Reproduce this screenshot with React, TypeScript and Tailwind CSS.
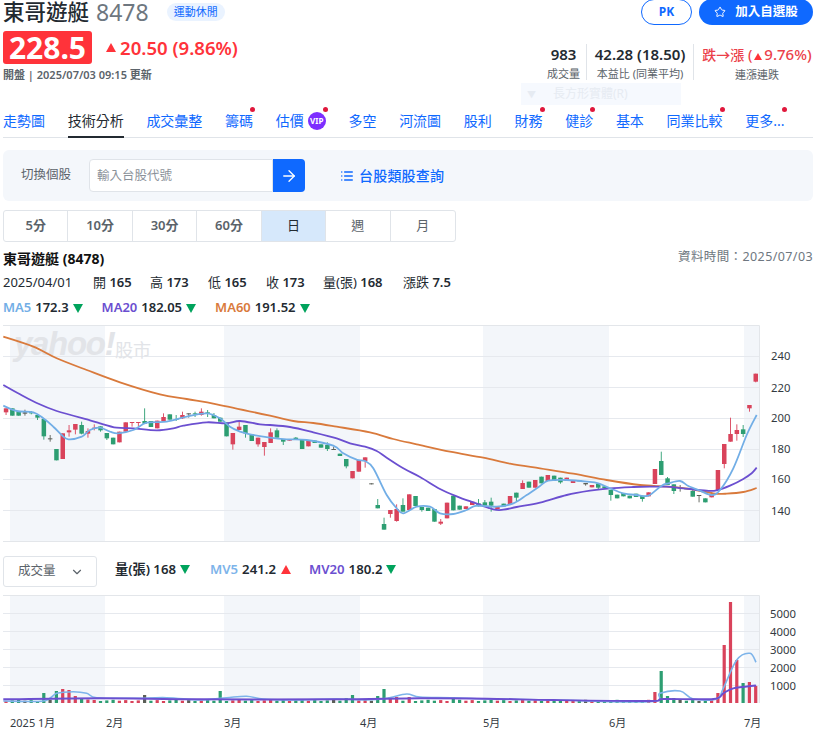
import React from "react";
import { ArrowRight, ChevronDown, List, Star } from "lucide-react";

const FONT = { fontFamily: '"Noto Sans","Noto Sans CJK TC",sans-serif' };
const RED = "#d9435b";
const GRN = "#2d9e72";
const DRK = "#5b5f57";

const r = RED, g = GRN, d = DRK;
// body top, body bottom, wick top, wick bottom (in 3x zoomed y), colour
const candles: [number, number, number, number, string][] = [
  [250,262,250,270,r],[250,272,250,272,g],[260,272,260,272,g],[262,266,254,272,d],[262,265,258,268,g],[270,278,268,285,g],[282,334,282,344,g],[340,343,330,350,d],[372,406,372,406,g],[325,402,325,402,r],
  [316,322,300,335,r],[297,314,297,328,r],[300,326,290,328,g],[318,326,310,338,r],[308,312,298,316,r],[304,316,304,320,g],[324,340,324,345,g],[338,358,338,358,g],[320,352,320,352,r],[292,320,292,320,r],
  [291,294,291,305,r],[291,294,291,303,r],[288,296,250,296,g],[288,306,288,306,g],[287,310,287,310,r],[276,288,265,288,r],[268,284,268,284,g],[282,285,270,288,g],[270,280,260,282,r],[265,267,265,278,d],
  [265,268,260,276,g],[260,270,250,272,r],[262,264,255,276,g],[270,280,264,280,g],[278,290,278,290,g],[292,334,292,334,g],[324,358,324,374,r],[305,315,285,315,r],[300,325,300,338,g],[328,348,328,348,g],
  [338,358,338,365,r],[351,366,351,392,r],[322,354,310,354,r],[316,338,310,338,g],[342,350,342,360,g],[344,347,344,347,r],[338,342,336,344,g],[344,372,344,372,g],[346,364,346,364,r],[347,354,345,354,g],
  [358,368,358,368,g],[360,372,352,378,g],[372,374,365,374,d],[386,393,386,393,g],[402,424,402,430,g],[438,460,438,460,r],[405,440,405,440,r],[397,408,397,428,r],[475,478,475,478,d],[540,550,522,550,g],
  [597,614,578,614,g],[555,567,555,578,r],[552,588,538,590,r],[540,560,520,560,g],[508,555,508,555,r],[513,543,513,543,g],[546,555,546,560,g],[548,558,548,558,g],[552,590,552,590,g],[590,596,582,600,r],
  [533,580,533,580,r],[512,556,512,556,g],[542,554,542,554,g],[544,552,544,552,r],[530,540,530,540,r],[535,544,522,544,g],[532,542,525,542,g],[530,542,518,560,g],[544,552,544,552,r],[536,544,536,544,g],
  [513,538,513,538,r],[503,518,503,528,g],[474,492,466,492,r],[470,488,470,488,g],[465,488,465,488,r],[455,475,455,475,g],[450,468,450,468,r],[452,468,452,468,g],[458,472,458,476,g],[458,468,458,468,r],
  [466,474,466,474,r],[466,468,466,468,g],[474,478,474,482,d],[480,487,480,487,r],[476,488,476,495,g],[484,490,484,490,g],[495,510,495,527,g],[509,520,509,520,g],[504,514,504,514,g],[512,520,512,520,g],
  [506,516,506,516,g],[512,522,512,530,g],[502,514,502,514,r],[432,477,432,477,r],[408,450,380,450,g],[460,480,456,480,g],[478,498,478,507,g],[486,490,480,500,d],[490,492,490,492,g],[498,515,490,515,g],
  [510,512,510,532,d],[520,532,520,532,g],[510,517,510,517,r],[435,495,435,495,r],[357,417,357,430,r],[327,350,278,350,r],[315,327,298,347,r],[313,327,300,336,g],[240,250,240,260,r],[146,170,146,172,r],
];

const pts = (offset: number, yBase: number, list: number[][]) => list.map(([x, y]) => [x / 3 + offset, y / 3 + yBase]);

const smooth = (p: number[][]) => {
  let s = `M${p[0][0].toFixed(1)} ${p[0][1].toFixed(1)}`;
  for (let i = 0; i < p.length - 1; i++) {
    const a = p[Math.max(i - 1, 0)], b = p[i], c = p[i + 1], e = p[Math.min(i + 2, p.length - 1)];
    const c1 = [b[0] + (c[0] - a[0]) / 6, b[1] + (c[1] - a[1]) / 6];
    const c2 = [c[0] - (e[0] - b[0]) / 6, c[1] - (e[1] - b[1]) / 6];
    s += `C${c1[0].toFixed(1)} ${c1[1].toFixed(1)} ${c2[0].toFixed(1)} ${c2[1].toFixed(1)} ${c[0].toFixed(1)} ${c[1].toFixed(1)}`;
  }
  return s;
};

const ma60 = [
  ...pts(0, 325, [[10,35],[100,65],[170,100],[260,135],[360,172],[480,208],[560,222],[650,238],[810,272]]),
  ...pts(270, 325, [[70,288],[130,294],[200,305],[300,322],[370,342],[440,358],[540,380],[640,398],[720,416],[810,430]]),
  ...pts(540, 325, [[100,446],[200,465],[300,480],[380,485],[450,492],[520,505],[560,506],[610,501],[650,489]]),
];
const ma20 = [
  ...pts(0, 325, [[10,180],[60,208],[110,234],[170,258],[270,286],[300,295],[350,308],[400,310],[470,316],[520,310],[550,302],[620,292],[680,295],[720,288],[780,298],[810,300]]),
  ...pts(270, 325, [[60,306],[130,322],[200,340],[240,355],[285,365],[320,378],[350,398],[400,430],[450,456],[510,492],[560,514],[610,532],[670,553],[700,554],[740,546],[810,533]]),
  ...pts(540, 325, [[80,510],[150,497],[210,490],[280,486],[330,485],[380,485],[430,490],[500,497],[530,496],[570,482],[610,462],[635,445],[650,428]]),
];
const ma5 = [
  ...pts(0, 325, [[10,242],[50,258],[100,262],[130,280],[160,305],[185,330],[205,343],[245,335],[270,315],[300,308],[330,320],[355,325],[400,315],[440,293],[500,290],[560,275],[620,265],[660,280],[690,305],[720,320],[750,328],[810,338]]),
  ...pts(270, 325, [[50,343],[110,345],[190,362],[220,385],[260,404],[285,408],[310,430],[350,510],[380,550],[400,565],[440,545],[480,545],[510,565],[550,567],[590,555],[620,542],[680,545],[730,535],[770,510],[810,483]]),
  ...pts(540, 325, [[25,467],[80,465],[140,470],[175,475],[210,490],[250,505],[290,510],[325,512],[365,482],[385,475],[420,468],[445,483],[480,497],[515,510],[540,495],[580,430],[620,330],[650,270]]),
];
const mv20 = [
  ...pts(0, 545, [[10,463],[300,460],[600,463],[1000,463],[1260,460]]),
  ...pts(420, 545, [[200,461],[400,465],[690,468],[730,462],[880,462],[910,445],[940,430],[1000,422],[1008,423]]),
];
const mv5 = [
  ...pts(0, 545, [[10,468],[130,468],[170,445],[220,440],[260,445],[290,458],[400,460],[500,458],[600,465],[680,458],[740,454],[790,462],[880,465],[1010,462],[1100,465],[1160,460],[1220,447],[1260,456]]),
  ...pts(420, 545, [[100,458],[200,462],[400,465],[690,470],[720,445],[780,438],[820,462],[890,462],[910,430],[950,345],[990,325],[1008,352]]),
];

const volOverride: Record<number, [number, string?]> = {
  6:[10,g],8:[12,g],9:[14,r],10:[13,r],11:[7,r],12:[4,g],13:[3.5,r],14:[3,r],22:[8,d],34:[12,g],54:[5,g],55:[8,g],59:[7,g],60:[14,g],61:[6,r],62:[6,r],64:[6,r],
  71:[6,g],103:[11,r],104:[32,g],105:[7,g],106:[5,g],113:[10,r],114:[58,r],115:[101,r],116:[43,r],117:[20,g],118:[21,r],119:[17,r],
};

const xOf = (i: number) => 6 + 6.3 * i;
const bands = [[10,105],[224,360],[483,609],[744,759]];

const Down = () => (
  <svg width="10" height="9" viewBox="0 0 10 9" className="inline-block ml-1"><path d="M0 0h10L5 9z" fill="#00a35c" /></svg>
);
const Up = ({ className = "" }: { className?: string }) => (
  <svg width="10" height="9" viewBox="0 0 10 9" className={"inline-block " + className}><path d="M5 0l5 9H0z" fill="#ff333a" /></svg>
);

const tabs = [
  ["走勢圖", 0], ["技術分析", 0], ["成交彙整", 0], ["籌碼", 1], ["估價", 2], ["多空", 0], ["河流圖", 0], ["股利", 0], ["財務", 1], ["健診", 1], ["基本", 0], ["同業比較", 1], ["更多...", 1],
] as const;

function PriceChart() {
  return (
    <svg width="826" height="220" viewBox="0 325 826 220" className="block">
      {bands.map(([a, b]) => <rect key={a} x={a} y={325} width={b - a} height={216} fill="#f3f6fa" />)}
      <path d="M3 325.5H759.5V541.5H3" fill="none" stroke="#e3e6ea" />
      {[356, 387, 418, 449, 479, 510].map((y) => <line key={y} x1="3" x2="759" y1={y + 0.5} y2={y + 0.5} stroke="#e6e9ee" />)}
      <text x="14" y="355" fontFamily='"Liberation Sans",sans-serif' fontSize="33" fontWeight="700" fontStyle="italic" fill="#e2e4e8" letterSpacing="-1.3">yahoo!</text>
      <text x="115" y="357" fontFamily='"Noto Sans CJK TC",sans-serif' fontSize="18" fill="#e2e4e8">股市</text>
      {candles.map(([t, b, wt, wb, c], i) => {
        const x = xOf(i);
        const Y = (v: number) => v / 3 + 325;
        return (
          <g key={i} fill={c} stroke="none">
            <rect x={x - 0.4} y={Y(wt)} width="0.9" height={(wb - wt) / 3} />
            <rect x={x - 2.2} y={Y(t)} width="4.5" height={Math.max((b - t) / 3, 1)} />
          </g>
        );
      })}
      <path d={smooth(ma60)} fill="none" stroke="#d97a3c" strokeWidth="1.8" />
      <path d={smooth(ma20)} fill="none" stroke="#6b4fd0" strokeWidth="1.8" />
      <path d={smooth(ma5)} fill="none" stroke="#72aee6" strokeWidth="1.8" />
      {[[240,356],[220,388],[200,418],[180,449],[160,479],[140,511]].map(([v, y]) => (
        <text key={v} x="771" y={y + 4} fontFamily='"Noto Sans",sans-serif' fontSize="11.3" fill="#333a41">{v}</text>
      ))}
    </svg>
  );
}

function VolumeChart() {
  const months: [string, number][] = [["2025 1月",10],["2月",106],["3月",224],["4月",360],["5月",483],["6月",609],["7月",744]];
  return (
    <svg width="826" height="143" viewBox="0 595 826 143" className="block">
      {bands.map(([a, b]) => <rect key={a} x={a} y={596} width={b - a} height={107} fill="#f3f6fa" />)}
      <path d="M3 595.5H759.5V703" fill="none" stroke="#e3e6ea" />
      {[613, 631, 649, 667, 685].map((y) => <line key={y} x1="3" x2="759" y1={y + 0.5} y2={y + 0.5} stroke="#e6e9ee" />)}
      {candles.map(([, , , , c], i) => {
        const o = volOverride[i];
        const h = o ? o[0] : 2 + (i * 7 % 5) * 0.3;
        return <rect key={i} x={xOf(i) - 1.6} y={703 - h} width="3.2" height={h} fill={o && o[1] ? o[1] : c} />;
      })}
      <path d={smooth(mv5)} fill="none" stroke="#7db4ea" strokeWidth="1.6" />
      <path d={smooth(mv20)} fill="none" stroke="#6b4fd0" strokeWidth="1.9" />
      {[[5000,614],[4000,632],[3000,650],[2000,668],[1000,686]].map(([v, y]) => (
        <text key={v} x="770" y={y + 4} fontFamily='"Noto Sans",sans-serif' fontSize="11.3" fill="#333a41">{v}</text>
      ))}
      {months.map(([m, x]) => (
        <text key={m} x={x} y="727" fontFamily='"Noto Sans","Noto Sans CJK TC",sans-serif' fontSize="11" fill="#333a41">{m}</text>
      ))}
    </svg>
  );
}

export default function App() {
  return (
    <div style={FONT} className="relative w-[826px] h-[738px] overflow-hidden bg-white pl-[3px] pr-[13px] text-[#232a31]">
      {/* title row */}
      <div className="flex items-start justify-between h-[31px]">
        <div className="flex items-center h-[24px]">
          <span className="text-[21.5px] leading-[24px] font-medium text-[#232a31]">東哥遊艇</span>
          <span className="text-[23px] leading-[24px] text-[#6e7780] ml-[7px]">8478</span>
          <span className="ml-[18px] h-[18px] px-[7px] rounded-full bg-[#eaf3ff] text-[#0f69ff] text-[11px] leading-[18px]">運動休閒</span>
        </div>
        <div className="flex -mt-[1px] gap-[7px]">
          <div className="w-[51px] h-[26px] rounded-full border border-[#0f69ff] flex items-center justify-center text-[#0f69ff] text-[12px] font-bold">PK</div>
          <div className="w-[114px] h-[26px] rounded-full bg-[#0f69ff] flex items-center justify-center text-white text-[12.5px] font-semibold gap-[9px]">
            <Star size={12} strokeWidth={2} />
            <span>加入自選股</span>
          </div>
        </div>
      </div>
      {/* price row */}
      <div className="flex justify-between h-[50px]">
        <div>
          <div className="flex items-center h-[33px]">
            <div className="w-[89px] h-[33px] rounded-[3px] bg-[#ff333a] text-white text-[30px] leading-[33px] font-bold text-center">228.5</div>
            <Up className="ml-[14px] mr-[4px]" />
            <span className="text-[#ff333a] text-[18.6px] leading-[24px] font-semibold">20.50 (9.86%)</span>
          </div>
          <div className="mt-[3px] text-[11px] leading-[16px] font-semibold text-[#5b636a]">開盤 | 2025/07/03 09:15 更新</div>
        </div>
        <div className="flex mt-[13px] h-[36px]">
          <div className="flex flex-col items-center w-[61px] border-r border-[#e0e4e9] pl-[15px]">
            <div className="text-[15px] leading-[20px] font-semibold whitespace-nowrap">983</div>
            <div className="mt-[1px] text-[11px] leading-[18px] text-[#5b636a] whitespace-nowrap">成交量</div>
          </div>
          <div className="flex flex-col items-center w-[107px] border-r border-[#e0e4e9]">
            <div className="text-[15px] leading-[20px] font-semibold whitespace-nowrap">42.28 (18.50)</div>
            <div className="mt-[1px] text-[11px] leading-[18px] text-[#5b636a] whitespace-nowrap">本益比 (同業平均)</div>
          </div>
          <div className="flex flex-col items-center w-[119px] pl-[7px]">
            <div className="text-[14px] leading-[20px] font-medium text-[#eb3f4a] whitespace-nowrap">跌→漲 (<Up className="w-[8px] mx-[2px]" /><span className="text-[15px]">9.76%)</span></div>
            <div className="mt-[1px] text-[11px] leading-[18px] text-[#5b636a]">連漲連跌</div>
          </div>
        </div>
      </div>
      {/* faded tooltip */}
      <div className="absolute left-[521px] top-[83px] w-[160px] h-[22px] bg-[#f6f9fe] text-[#e6ebf2] text-[12px] leading-[22px] pl-[6px] whitespace-nowrap">
        <span className="inline-block w-[26px] text-[9px]">▼</span>長方形實體(R)
      </div>
      {/* tabs */}
      <div className="relative flex gap-[22.7px] h-[57px] pt-[30px] border-b border-[#e0e4e9] text-[14px] leading-[20px] text-[#0f69ff]">
        {tabs.map(([t, m]) => (
          <div key={t} className={"relative flex items-start h-[27px] whitespace-nowrap " + (t === "技術分析" ? "text-[#232a31] border-b-[2px] border-[#232a31]" : "")}>
            {t}
            {m === 2 && (
              <span className="ml-[4px] mt-[1px] w-[18px] h-[18px] rounded-full bg-[#7d2eff] text-white text-[8px] font-bold leading-[18px] text-center">VIP</span>
            )}
            {m > 0 && <span className="absolute right-[-2px] top-[-4px] w-[5px] h-[5px] rounded-full bg-[#e0183c]" />}
          </div>
        ))}
      </div>
      {/* search panel */}
      <div className="mt-[12px] h-[51px] rounded-[6px] bg-[#f4f7fb] flex items-center">
        <span className="ml-[18px] text-[12.5px] text-[#5b636a]">切換個股</span>
        <div className="ml-[18px] w-[184px] h-[33px] bg-white border border-[#e0e4e9] rounded-l-[4px] pl-[7px] text-[12.5px] leading-[31px] text-[#8a9199]">輸入台股代號</div>
        <div className="w-[32px] h-[33px] bg-[#0f69ff] rounded-r-[4px] flex items-center justify-center text-white">
          <ArrowRight size={18} strokeWidth={1.75} />
        </div>
        <div className="ml-[35px] flex items-center gap-[5px] text-[#0f69ff] text-[14px] font-medium tracking-[0.2px]">
          <List size={14} strokeWidth={2.5} />
          <span>台股類股查詢</span>
        </div>
      </div>
      {/* interval */}
      <div className="mt-[9px] w-[453px] h-[32px] grid grid-cols-7 border border-[#e0e4e9] rounded-[3px] text-[13px] font-semibold text-[#5b636a]">
        {["5分","10分","30分","60分","日","週","月"].map((t, i) => (
          <div key={t} className={"flex items-center justify-center " + (i < 6 ? "border-r border-[#e0e4e9] " : "") + (t === "日" ? "bg-[#d6e8fb] font-normal text-[#232a31]" : "") + (i > 3 && t !== "日" ? "font-normal" : "")}>{t}</div>
        ))}
      </div>
      {/* heading */}
      <div className="mt-[6px] flex justify-between h-[20px] items-center">
        <span className="text-[14px] font-bold text-[#111] mt-[1px]">東哥遊艇 (8478)</span>
        <span className="text-[12.5px] text-[#6e7780] tracking-[0.4px] -mt-[1px]">資料時間：2025/07/03</span>
      </div>
      <div className="mt-[5px] flex h-[20px] items-center text-[13px] text-[#232a31] whitespace-nowrap">
        <span className="w-[90px]">2025/04/01</span>
        {[["開","165",57],["高","173",58],["低","165",58],["收","173",57],["量(張)","168",80],["漲跌","7.5",80]].map(([a, b, w]) => (
          <span key={a as string} style={{ width: w as number }}>{a} <b className="font-semibold">{b}</b></span>
        ))}
      </div>
      <div className="mt-[5px] flex h-[20px] items-center text-[13px] font-semibold whitespace-nowrap">
        <span className="text-[#72aee6]">MA5</span><span className="ml-[4px]">172.3</span><Down />
        <span className="ml-[19px] text-[#6b4fd0]">MA20</span><span className="ml-[4px]">182.05</span><Down />
        <span className="ml-[19px] text-[#d97a3c]">MA60</span><span className="ml-[4px]">191.52</span><Down />
      </div>
      {/* price chart */}
      <div className="-ml-[3px] mt-[7px] h-[220px]"><PriceChart /></div>
      {/* volume selector */}
      <div className="mt-[11px] flex items-center h-[31px] whitespace-nowrap">
        <div className="w-[94px] h-[31px] bg-white border border-[#e0e4e9] rounded-[3px] flex items-center justify-between pl-[14px] pr-[12px] text-[12.5px] text-[#5b636a]">
          成交量 <ChevronDown size={14} />
        </div>
        <div className="ml-[18px] flex items-center text-[13.2px] font-semibold -mt-[4px]">
          <span>量(張) 168</span><Down />
          <span className="ml-[20px] text-[#7db4ea]">MV5</span><span className="ml-[4px]">241.2</span><Up className="ml-[5px]" />
          <span className="ml-[18px] text-[#6b4fd0]">MV20</span><span className="ml-[4px]">180.2</span><Down />
        </div>
      </div>
      <div className="-ml-[3px] mt-[8px]"><VolumeChart /></div>
    </div>
  );
}
